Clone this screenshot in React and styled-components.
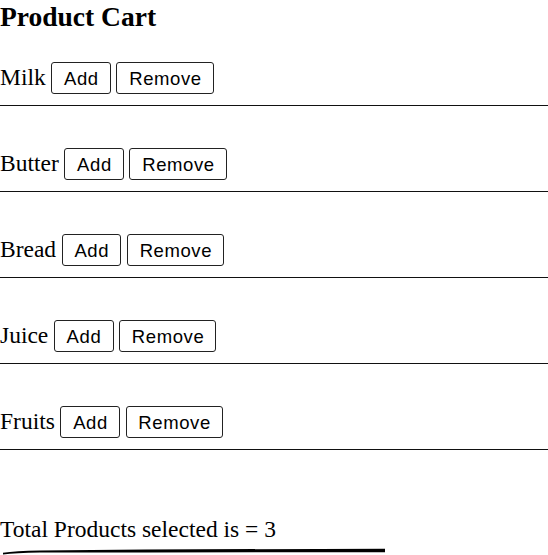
import React, { useState } from "react";
import styled, { createGlobalStyle } from "styled-components";

const GlobalStyle = createGlobalStyle`
  html, body { margin: 0; padding: 0; background: #fff; }
  body {
    font-family: "Liberation Serif", "Times New Roman", serif;
    color: #000;
    overflow: hidden;
  }
`;

const Page = styled.div`
  width: 548px;
  display: flex;
  flex-direction: column;
`;

const Title = styled.h3`
  margin: 1px 0 28px;
  font-size: 27.5px;
  line-height: 32px;
  font-weight: 700;
`;

const List = styled.div`
  display: flex;
  flex-direction: column;
`;

const Row = styled.div`
  display: flex;
  align-items: baseline;
  gap: 5.5px;
  height: 32px;
`;

const Name = styled.span`
  font-size: 23.5px;
  line-height: 32px;
`;

const Button = styled.button`
  box-sizing: border-box;
  height: 32px;
  padding: 1px 11.2px 0 11.8px;
  margin: 0;
  line-height: 29px;
  font-family: "Liberation Sans", Arial, sans-serif;
  font-size: 18.5px;
  letter-spacing: 0.6px;
  color: #000;
  background: #fff;
  border: 1px solid #222;
  border-radius: 3px;
  cursor: pointer;
`;

const Divider = styled.div`
  height: 1px;
  background: #111;
  margin: 12px 0 41px;
`;

const Total = styled.div`
  margin-top: 25px;
  font-size: 23.5px;
  line-height: 27px;
`;

const Underline = styled.svg`
  display: block;
  margin-top: 4px;
  width: 386px;
  height: 8px;
`;

const products = ["Milk", "Butter", "Bread", "Juice", "Fruits"];

export default function App() {
  const [count, setCount] = useState(3);
  return (
    <Page>
      <GlobalStyle />
      <Title>Product Cart</Title>
      <List>
        {products.map((p) => (
          <React.Fragment key={p}>
            <Row>
              <Name>{p}</Name>
              <Button onClick={() => setCount((c) => c + 1)}>Add</Button>
              <Button onClick={() => setCount((c) => Math.max(0, c - 1))}>
                Remove
              </Button>
            </Row>
            <Divider />
          </React.Fragment>
        ))}
      </List>
      <Total>Total Products selected is = {count}</Total>
      <Underline viewBox="0 0 386 8">
        <path
          d="M3 5.8 Q 15 4.2 40 3.6 Q 200 2 385 1.8 L385 5.2 Q 200 5.2 40 5.6 Q 15 6.2 3 7.4 Z"
          fill="#000"
        />
      </Underline>
    </Page>
  );
}
